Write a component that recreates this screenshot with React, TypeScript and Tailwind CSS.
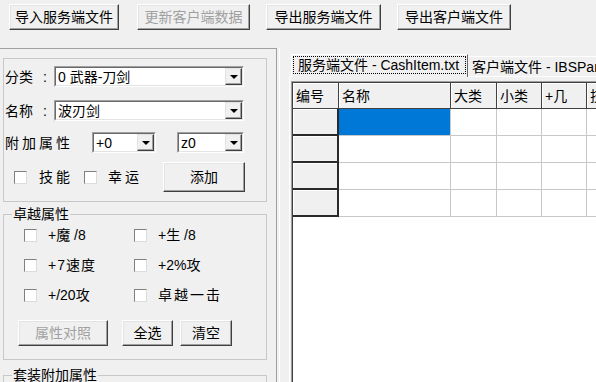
import React from "react";

function Btn({
  children,
  className = "",
  disabled = false,
}: {
  children: React.ReactNode;
  className?: string;
  disabled?: boolean;
}) {
  return (
    <div
      className={`flex items-center justify-center bg-[#f0f0f0] border border-t-[#ffffff] border-l-[#ffffff] border-r-[#404040] border-b-[#404040] shadow-[inset_-1px_-1px_0_#a0a0a0,inset_1px_1px_0_#e3e3e3] text-[14px] leading-none whitespace-nowrap shrink-0 ${
        disabled ? "text-[#a0a0a0]" : "text-black"
      } ${className}`}
    >
      {children}
    </div>
  );
}

function Combo({ text, className = "" }: { text: string; className?: string }) {
  return (
    <div
      className={`h-[21px] flex shrink-0 border border-t-[#a0a0a0] border-l-[#a0a0a0] border-r-[#ffffff] border-b-[#ffffff] ${className}`}
    >
      <div className="flex-1 flex items-stretch bg-white border border-t-[#696969] border-l-[#696969] border-r-[#e3e3e3] border-b-[#e3e3e3] min-w-0">
        <div className="flex-1 flex items-center pl-[2px] text-[14px] leading-none whitespace-pre overflow-hidden">
          {text}
        </div>
        <div className="w-[17px] flex items-center justify-center bg-[#f0f0f0] border border-t-[#e3e3e3] border-l-[#e3e3e3] border-r-[#404040] border-b-[#404040] shadow-[inset_-1px_-1px_0_#a0a0a0]">
          <div className="w-0 h-0 border-l-[4px] border-r-[4px] border-t-[4px] border-l-transparent border-r-transparent border-t-black" />
        </div>
      </div>
    </div>
  );
}

function Check() {
  return (
    <div className="w-[13px] h-[13px] shrink-0 bg-white border border-t-[#808080] border-l-[#808080] border-r-[#dcdcdc] border-b-[#dcdcdc]" />
  );
}

function CheckItem({
  label,
  className = "",
  labelClass = "",
}: {
  label: string;
  className?: string;
  labelClass?: string;
}) {
  return (
    <div className={`flex items-center ${className}`}>
      <Check />
      <span className={`ml-[11px] text-[14px] leading-none whitespace-nowrap ${labelClass}`}>{label}</span>
    </div>
  );
}

const cols = [46, 112, 46, 45, 45, 60];
const heads = ["编号", "名称", "大类", "小类", "+几", "技"];

function Grid() {
  return (
    <div className="flex-1 flex flex-col border-l border-t border-[#a0a0a0] min-h-0">
      <div className="flex-1 flex flex-col border-l border-t border-[#404040] bg-white overflow-hidden">
        <div className="flex h-[26px] shrink-0">
          {heads.map((h, i) => (
            <div
              key={h}
              style={{ width: cols[i] }}
              className="shrink-0 h-full flex items-center pl-[3px] bg-[#f0f0f0] border-r border-b border-[#404040] shadow-[inset_1px_1px_0_#ffffff] text-[14px] leading-none whitespace-nowrap overflow-hidden"
            >
              {h}
            </div>
          ))}
        </div>
        {[0, 1, 2, 3].map((r) => (
          <div key={r} className="flex h-[27px] shrink-0">
            {cols.map((w, i) =>
              i === 0 ? (
                <div
                  key={i}
                  style={{ width: w }}
                  className="shrink-0 h-full bg-[#f0f0f0] border-r-2 border-b-2 border-[#2a2a2a] shadow-[inset_1px_1px_0_#ffffff]"
                />
              ) : (
                <div
                  key={i}
                  style={{ width: w }}
                  className={`shrink-0 h-full border-r border-b border-[#c8c8c8] ${
                    r === 0 && i === 1 ? "bg-[#0078d7]" : "bg-white"
                  }`}
                />
              )
            )}
          </div>
        ))}
      </div>
    </div>
  );
}

export default function App() {
  return (
    <div className="w-[596px] h-[382px] bg-[#f0f0f0] overflow-hidden flex flex-col text-black font-[family-name:'Liberation_Sans','Noto_Sans_CJK_SC',sans-serif]">
      {/* toolbar */}
      <div className="h-[48px] flex items-start pt-[4px] shrink-0">
        <Btn className="ml-[9px] w-[110px] h-[26px]">导入服务端文件</Btn>
        <Btn disabled className="ml-[18px] w-[113px] h-[26px]">
          更新客户端数据
        </Btn>
        <Btn className="ml-[16px] w-[115px] h-[26px]">导出服务端文件</Btn>
        <Btn className="ml-[16px] w-[114px] h-[26px]">导出客户端文件</Btn>
      </div>

      <div className="flex flex-1 min-h-0">
        {/* left panel */}
        <div className="w-[277px] h-full shrink-0 border-t border-r border-[#a0a0a0] pl-[3px] pt-[9px] flex flex-col">
          <div className="w-[264px] h-[144px] shrink-0 border border-[#c8c8c8] flex flex-col pl-[1px] pt-[7px]">
            <div className="flex items-center">
              <div className="w-[49px] flex items-center text-[14px] leading-none">
                <span>分类</span>
                <span className="ml-[10px]">:</span>
              </div>
              <Combo text="0 武器-刀剑" className="w-[190px]" />
            </div>
            <div className="flex items-center mt-[13px]">
              <div className="w-[49px] flex items-center text-[14px] leading-none">
                <span>名称</span>
                <span className="ml-[10px]">:</span>
              </div>
              <Combo text="波刃剑" className="w-[190px]" />
            </div>
            <div className="flex items-center mt-[11px]">
              <div className="w-[87px] text-[14px] leading-none tracking-[3px] whitespace-nowrap">附加属性</div>
              <Combo text="+0" className="w-[64px]" />
              <Combo text="z0" className="ml-[21px] w-[67px]" />
            </div>
            <div className="flex items-center mt-[9px] h-[30px] pl-[9px]">
              <Check />
              <span className="ml-[12px] w-[45px] text-[14px] leading-none tracking-[3px]">技能</span>
              <Check />
              <span className="ml-[11px] w-[55px] text-[14px] leading-none tracking-[3px]">幸运</span>
              <Btn className="w-[82px] h-[30px]">添加</Btn>
            </div>
          </div>

          <fieldset className="mt-[4px] w-[264px] h-[154px] shrink-0 border border-[#c8c8c8] flex flex-col">
            <legend className="ml-[8px] px-[1px] text-[14px] leading-[16px]">卓越属性</legend>
            <div className="flex flex-col pl-[20px]">
              <div className="flex h-[26px] items-center">
                <CheckItem label="+魔 /8" className="w-[110px]" />
                <CheckItem label="+生 /8" />
              </div>
              <div className="flex h-[26px] items-center mt-[4px]">
                <CheckItem label="+7速度" className="w-[110px]" labelClass="tracking-[1px]" />
                <CheckItem label="+2%攻" />
              </div>
              <div className="flex h-[26px] items-center mt-[4px]">
                <CheckItem label="+/20攻" className="w-[110px]" />
                <CheckItem label="卓越一击" labelClass="tracking-[2px]" />
              </div>
            </div>
            <div className="flex mt-[12px] pl-[14px]">
              <Btn disabled className="w-[90px] h-[26px]">
                属性对照
              </Btn>
              <Btn className="ml-[14px] w-[51px] h-[26px]">全选</Btn>
              <Btn className="ml-[7px] w-[52px] h-[26px]">清空</Btn>
            </div>
          </fieldset>

          <fieldset className="mt-[7px] w-[264px] h-[80px] shrink-0 border border-[#c8c8c8]">
            <legend className="ml-[8px] px-[1px] text-[14px] leading-[16px]">套装附加属性</legend>
          </fieldset>
        </div>

        {/* splitter */}
        <div className="w-[3px] h-full shrink-0 border-r border-white" />

        {/* right */}
        <div className="flex-1 min-w-0 h-full flex flex-col pt-[6px] pl-[9px]">
          <div className="flex items-end h-[22px] shrink-0">
            <div className="ml-[2px] w-[177px] h-[23px] -mb-[1px] relative z-10 bg-[#f0f0f0] border-t border-l border-r border-t-white border-l-white border-r-[#696969] p-[1px] shrink-0">
              <div className="w-full h-[18px] border border-dotted border-black flex items-center pl-[4px] text-[14px] leading-none whitespace-nowrap overflow-hidden">
                服务端文件 - CashItem.txt
              </div>
            </div>
            <div className="h-[20px] flex-1 min-w-0 border-t border-white flex items-center pl-[4px] text-[14px] leading-none whitespace-nowrap overflow-hidden">
              客户端文件 - IBSPartList.txt
            </div>
          </div>
          <div className="flex-1 min-h-0 flex flex-col border-l border-t border-white pl-[1px] pt-[4px]">
            <Grid />
          </div>
        </div>
      </div>
    </div>
  );
}
